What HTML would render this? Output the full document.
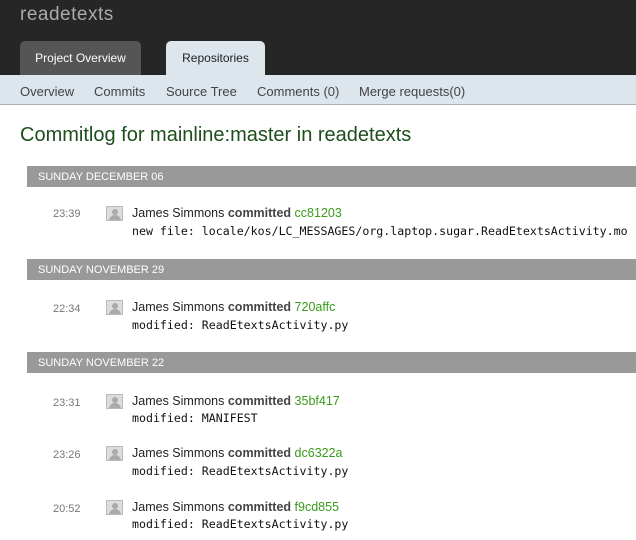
<!DOCTYPE html>
<html><head><style>
body{margin:0;width:636px;height:540px;overflow:hidden;background:#fff;font-family:"Liberation Sans",sans-serif;position:relative}
.a{position:absolute;white-space:nowrap}
.hdr{left:0;top:0;width:636px;height:75px;background:#262626}
.tab{top:41px;height:34px;border-radius:5px 5px 0 0;font-size:12px;line-height:35px;text-align:center}
.sub{left:0;top:75px;width:636px;height:29px;background:#dde5ed;border-bottom:1px solid #aab0b6}
.sub span{position:absolute;top:9px;font-size:13px;color:#444}
.bar{left:27px;width:609px;height:21px;background:#999;color:#fff;font-size:11px;line-height:22px;text-indent:11px}
.t{left:53px;font-size:11px;color:#777}
.av{left:106px;width:17px;height:15px;background:#ddd;border:1px solid #bbb;box-sizing:border-box;overflow:hidden}
.av:before{content:"";position:absolute;left:5px;top:2px;width:6px;height:6px;border-radius:50%;background:#aaa}
.av:after{content:"";position:absolute;left:2px;top:8px;width:12px;height:8px;border-radius:6px 6px 0 0;background:#aaa}
.n{left:132px;font-size:12.5px;color:#222}
.n b{color:#444}
.n i{font-style:normal;color:#3a9a1a}
.m{left:132px;font-family:"DejaVu Sans Mono",monospace;font-size:11.6px;color:#111}
</style></head><body>
<div class="a hdr"></div>
<div class="a" style="left:20px;top:4px;font-size:19px;color:#aaa;letter-spacing:0.5px">readetexts</div>
<div class="a tab" style="left:20px;width:121px;background:#555;color:#fff">Project Overview</div>
<div class="a tab" style="left:166px;width:99px;background:#dde5ed;color:#222">Repositories</div>
<div class="a sub"><span style="left:20px">Overview</span><span style="left:94px">Commits</span><span style="left:166px">Source Tree</span><span style="left:257px">Comments (0)</span><span style="left:359px">Merge requests(0)</span></div>
<div class="a" style="left:20px;top:124px;font-size:20px;color:#1e4d1e">Commitlog for mainline:master in readetexts</div>

<div class="a bar" style="top:166px">SUNDAY DECEMBER 06</div>
<div class="a t" style="top:208px">23:39</div><div class="a av" style="top:206px"></div>
<div class="a n" style="top:206px">James Simmons <b>committed</b> <i>cc81203</i></div>
<div class="a m" style="top:224px">new file: locale/kos/LC_MESSAGES/org.laptop.sugar.ReadEtextsActivity.mo</div>

<div class="a bar" style="top:259px">SUNDAY NOVEMBER 29</div>
<div class="a t" style="top:303px">22:34</div><div class="a av" style="top:300px"></div>
<div class="a n" style="top:300px">James Simmons <b>committed</b> <i>720affc</i></div>
<div class="a m" style="top:318px">modified: ReadEtextsActivity.py</div>

<div class="a bar" style="top:352px">SUNDAY NOVEMBER 22</div>
<div class="a t" style="top:397px">23:31</div><div class="a av" style="top:394px"></div>
<div class="a n" style="top:394px">James Simmons <b>committed</b> <i>35bf417</i></div>
<div class="a m" style="top:411px">modified: MANIFEST</div>

<div class="a t" style="top:449px">23:26</div><div class="a av" style="top:446px"></div>
<div class="a n" style="top:446px">James Simmons <b>committed</b> <i>dc6322a</i></div>
<div class="a m" style="top:464px">modified: ReadEtextsActivity.py</div>

<div class="a t" style="top:503px">20:52</div><div class="a av" style="top:500px"></div>
<div class="a n" style="top:500px">James Simmons <b>committed</b> <i>f9cd855</i></div>
<div class="a m" style="top:517px">modified: ReadEtextsActivity.py</div>
</body></html>
